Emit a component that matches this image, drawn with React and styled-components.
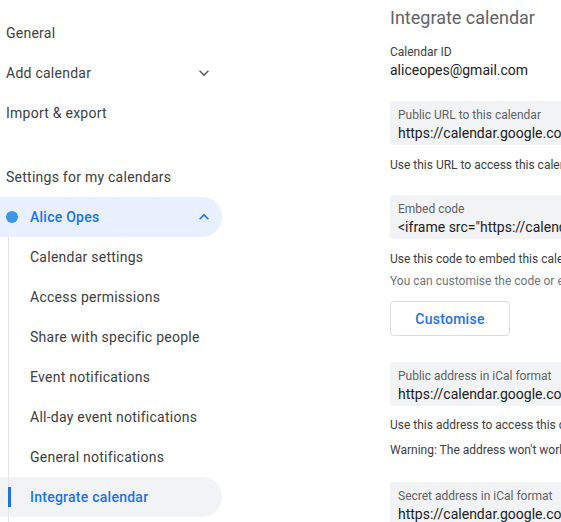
import React from "react";
import styled, { createGlobalStyle, css } from "styled-components";

const Global = createGlobalStyle`
  html, body { margin: 0; padding: 0; background: #fff; }
  body {
    width: 561px; height: 522px; overflow: hidden;
    font-family: Roboto, "Noto Sans", Arial, sans-serif;
    color: #3c4043;
    -webkit-font-smoothing: antialiased;
  }
`;

const Page = styled.div`
  display: flex;
  align-items: flex-start;
  width: 561px;
  height: 522px;
  overflow: hidden;
`;

const Sidebar = styled.nav`
  flex: 0 0 222px;
  width: 222px;
  padding-top: 13px;
  display: flex;
  flex-direction: column;
`;

const NavItem = styled.div`
  height: 40px;
  display: flex;
  align-items: center;
  justify-content: space-between;
  padding: 0 8px 0 6px;
  font-size: 14px;
  letter-spacing: 0.25px;
  color: #3c4043;
`;

const Spacer = styled.div`
  height: ${(p) => p.$h}px;
`;

const SectionTitle = styled.div`
  height: 40px;
  display: flex;
  align-items: center;
  padding-left: 6px;
  font-size: 14px;
  letter-spacing: 0.25px;
  color: #3c4043;
`;

const CalendarRow = styled.div`
  height: 40px;
  display: flex;
  align-items: center;
  padding: 0 8px 0 6px;
  background: #e8f0fe;
  border-radius: 0 20px 20px 0;
  color: #1a73e8;
  font-size: 14px;
  font-weight: 500;
  letter-spacing: 0.25px;
`;

const Dot = styled.span`
  width: 12px;
  height: 12px;
  border-radius: 50%;
  background: #3b97e3;
  flex: 0 0 12px;
  margin-right: 12px;
`;

const Grow = styled.span`
  flex: 1;
`;

const SubList = styled.div`
  display: flex;
  flex-direction: column;
  padding-bottom: 20px;
  background: linear-gradient(#e3e4e6, #e3e4e6) no-repeat 8px 0 / 1px 100%;
`;

const SubItem = styled.div`
  height: 40px;
  display: flex;
  align-items: center;
  padding-left: 30px;
  font-size: 14px;
  letter-spacing: 0.25px;
  color: #3c4043;
  border-radius: 0 20px 20px 0;
  ${(p) =>
    p.$active &&
    css`
      color: #1a73e8;
      font-weight: 500;
      background:
        linear-gradient(#1a73e8, #1a73e8) no-repeat 8px center / 3px 20px,
        linear-gradient(#e3e4e6, #e3e4e6) no-repeat 8px 0 / 1px 100%,
        #f1f3f4;
    `}
`;

const Main = styled.main`
  flex: 0 0 420px;
  margin-left: 168px;
  display: flex;
  flex-direction: column;
  align-items: flex-start;
`;

const Heading = styled.h2`
  margin: 6px 0 0;
  font-size: 18px;
  line-height: 24px;
  font-weight: 400;
  color: #5f6368;
  white-space: nowrap;
`;

const Field = styled.div`
  margin-top: ${(p) => p.$mt}px;
  display: flex;
  flex-direction: column;
`;

const FieldLabel = styled.div`
  font-size: 12px;
  line-height: 16px;
  color: #3c4043;
`;

const FieldValue = styled.div`
  font-size: 14px;
  line-height: 20px;
  color: #202124;
  white-space: nowrap;
`;

const CodeBox = styled.div`
  margin-top: ${(p) => p.$mt}px;
  width: 400px;
  height: 44px;
  box-sizing: border-box;
  padding: 6px 8px 2px;
  background: #f1f3f4;
  border-radius: 4px;
  display: flex;
  flex-direction: column;
  white-space: nowrap;
  overflow: hidden;
`;

const BoxLabel = styled.div`
  font-size: 12px;
  line-height: 16px;
  color: #5f6368;
`;

const BoxValue = styled.div`
  font-size: 14px;
  line-height: 20px;
  color: #202124;
`;

const Help = styled.p`
  margin: ${(p) => p.$mt}px 0 0;
  font-size: 12px;
  line-height: 16px;
  color: ${(p) => (p.$muted ? "#70757a" : "#3c4043")};
  white-space: nowrap;
`;

const Button = styled.button`
  margin-top: ${(p) => p.$mt}px;
  width: 120px;
  height: 35px;
  box-sizing: border-box;
  border: 1px solid #dadce0;
  border-radius: 4px;
  background: #fff;
  color: #1a73e8;
  font-family: Roboto, Arial, sans-serif;
  font-size: 14px;
  font-weight: 500;
  letter-spacing: 0.25px;
  padding: 0;
  cursor: pointer;
`;

const Chevron = ({ up, color }) => (
  <svg width="20" height="20" viewBox="0 0 24 24" fill={color}>
    {up ? (
      <path d="M7.41 15.41L12 10.83l4.59 4.58L18 14l-6-6-6 6z" />
    ) : (
      <path d="M16.59 8.59L12 13.17 7.41 8.59 6 10l6 6 6-6z" />
    )}
  </svg>
);

const subItems = [
  "Calendar settings",
  "Access permissions",
  "Share with specific people",
  "Event notifications",
  "All-day event notifications",
  "General notifications",
  "Integrate calendar",
];

export default function App() {
  return (
    <>
      <Global />
      <Page>
        <Sidebar>
          <NavItem>General</NavItem>
          <NavItem>
            Add calendar
            <Chevron color="#5f6368" />
          </NavItem>
          <NavItem>Import &amp; export</NavItem>
          <Spacer $h={24} />
          <SectionTitle>Settings for my calendars</SectionTitle>
          <CalendarRow>
            <Dot />
            <Grow>Alice Opes</Grow>
            <Chevron up color="#1a73e8" />
          </CalendarRow>
          <SubList>
            {subItems.map((s) => (
              <SubItem key={s} $active={s === "Integrate calendar"}>
                {s}
              </SubItem>
            ))}
          </SubList>
        </Sidebar>
        <Main>
          <Heading>Integrate calendar</Heading>
          <Field $mt={14}>
            <FieldLabel>Calendar ID</FieldLabel>
            <FieldValue>aliceopes@gmail.com</FieldValue>
          </Field>
          <CodeBox $mt={21}>
            <BoxLabel>Public URL to this calendar</BoxLabel>
            <BoxValue>https://calendar.google.com/calendar/embed?src=aliceopes%40gmail.com</BoxValue>
          </CodeBox>
          <Help $mt={12}>Use this URL to access this calendar from a web browser.</Help>
          <CodeBox $mt={22}>
            <BoxLabel>Embed code</BoxLabel>
            <BoxValue>&lt;iframe src="https://calendar.google.com/calendar/embed?src=aliceopes</BoxValue>
          </CodeBox>
          <Help $mt={12}>Use this code to embed this calendar in a web page.</Help>
          <Help $mt={6} $muted>You can customise the code or embed multiple calendars.</Help>
          <Button $mt={12}>Customise</Button>
          <CodeBox $mt={26}>
            <BoxLabel>Public address in iCal format</BoxLabel>
            <BoxValue>https://calendar.google.com/calendar/ical/aliceopes%40gmail.com</BoxValue>
          </CodeBox>
          <Help $mt={11}>Use this address to access this calendar from other applications.</Help>
          <Help $mt={9}>Warning: The address won't work unless you make your calendar public.</Help>
          <CodeBox $mt={24}>
            <BoxLabel>Secret address in iCal format</BoxLabel>
            <BoxValue>https://calendar.google.com/calendar/ical/aliceopes%40gmail.com/private</BoxValue>
          </CodeBox>
        </Main>
      </Page>
    </>
  );
}
